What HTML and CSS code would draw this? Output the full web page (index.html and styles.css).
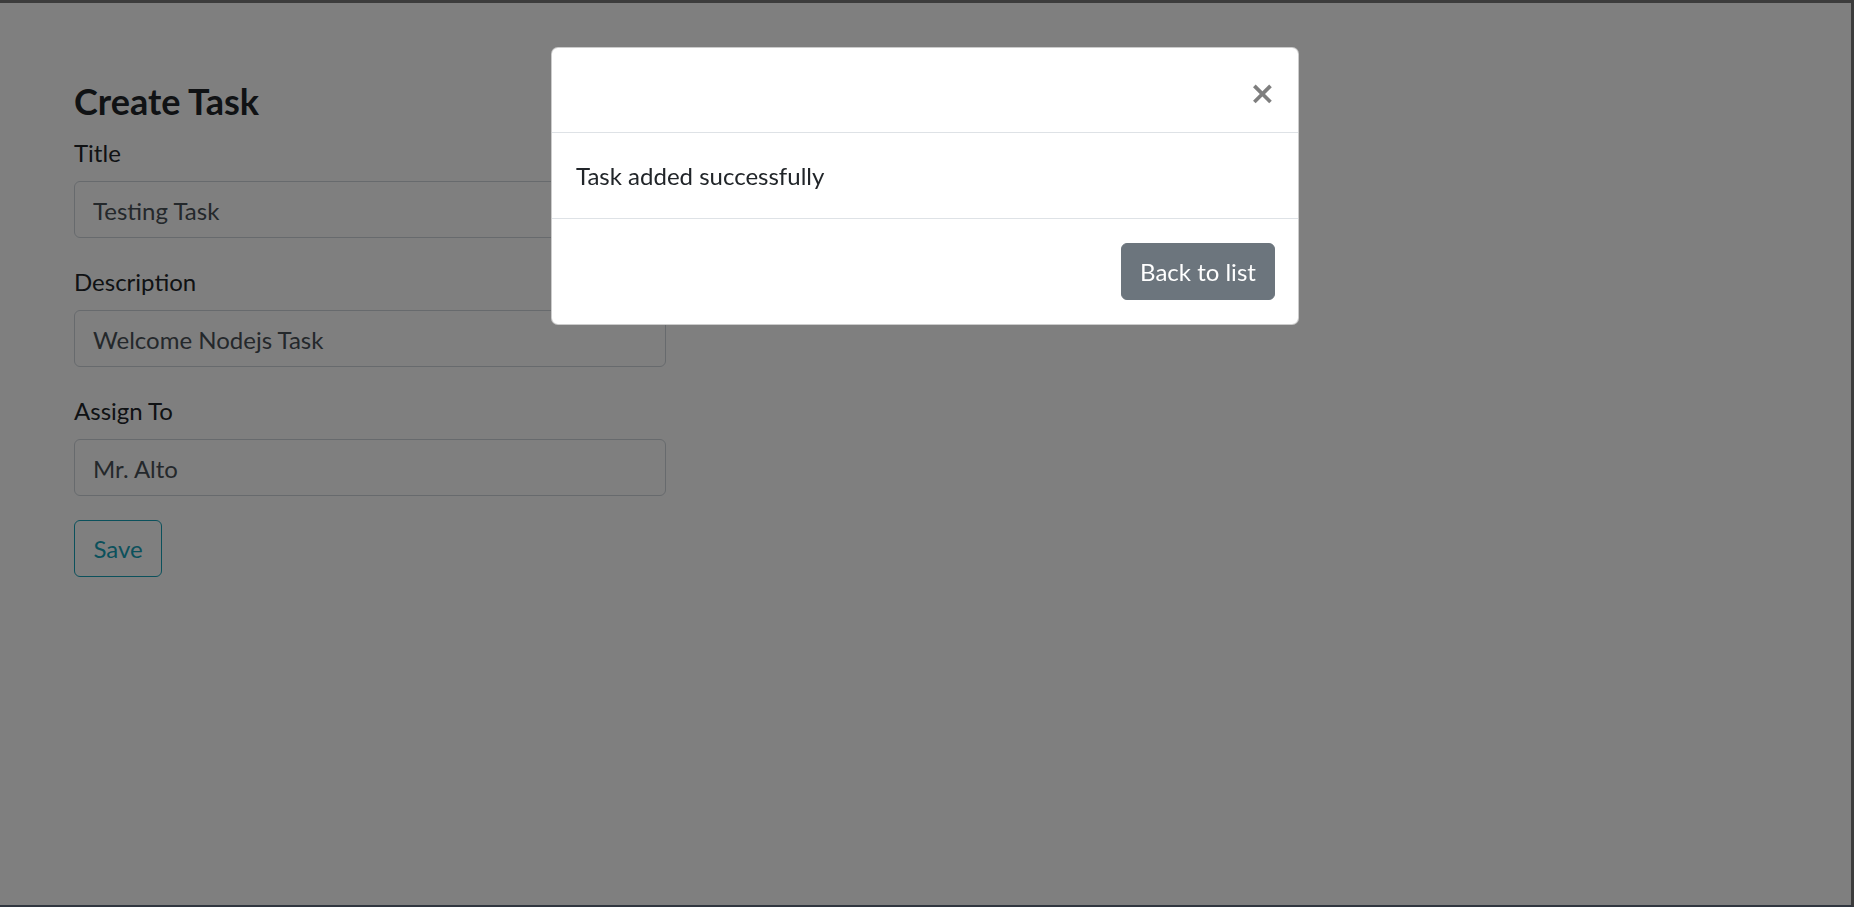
FILE: index.html
```html
<!DOCTYPE html>
<html lang="en">
<head>
<meta charset="utf-8">
<title>Create Task</title>
<link rel="stylesheet" href="styles.css">
</head>
<body>
<main class="page">
  <h4 class="page-title">Create Task</h4>
  <form class="task-form">
    <div class="form-group">
      <label class="form-label">Title</label>
      <input class="form-control" type="text" value="Testing Task">
    </div>
    <div class="form-group">
      <label class="form-label">Description</label>
      <input class="form-control" type="text" value="Welcome Nodejs Task">
    </div>
    <div class="form-group">
      <label class="form-label">Assign To</label>
      <input class="form-control" type="text" value="Mr. Alto">
    </div>
    <button type="button" class="btn btn-outline-info">Save</button>
  </form>
</main>

<div class="backdrop"></div>

<div class="modal-layer">
  <div class="modal-content">
    <div class="modal-header">
      <button type="button" class="close" aria-label="Close">&times;</button>
    </div>
    <div class="modal-body">Task added successfully</div>
    <div class="modal-footer">
      <button type="button" class="btn btn-secondary">Back to list</button>
    </div>
  </div>
</div>

<div class="window-frame"></div>
</body>
</html>
```

FILE: styles.css
```css
* { box-sizing: border-box; }

html, body {
  margin: 0;
  height: 100%;
}

body {
  font-family: "Lato", "Open Sans", sans-serif;
  font-size: 24px;
  line-height: 1.5;
  color: #212529;
  background: #fff;
}

.page {
  padding: 80px 0 0 74px;
  width: 740px;
}

.page-title {
  margin: 0 0 10px;
  font-size: 36px;
  font-weight: 700;
  line-height: 1.2;
}

.task-form {
  width: 592px;
}

.form-group {
  margin-bottom: 24px;
}

.form-label {
  display: block;
  padding-top: 2px;
  margin-bottom: 10px;
}

.form-control {
  display: block;
  width: 100%;
  height: 57px;
  padding: 10px 18px 8px;
  font: inherit;
  color: #495057;
  background: #fff;
  border: 1px solid #ced4da;
  border-radius: 6px;
}

.btn {
  display: inline-block;
  height: 57px;
  padding: 0 17px;
  font: inherit;
  border: 1px solid transparent;
  border-radius: 6px;
  cursor: pointer;
}

.btn-outline-info {
  color: #17a2b8;
  background: transparent;
  border-color: #17a2b8;
  width: 88px;
}

.btn-secondary {
  color: #fff;
  background: #6c757d;
  border-color: #6c757d;
  width: 154px;
}

.backdrop {
  position: fixed;
  inset: 0;
  background: rgba(0, 0, 0, 0.5);
}

.modal-layer {
  position: fixed;
  inset: 0;
  display: flex;
  justify-content: center;
  align-items: flex-start;
  padding: 47px 0 0 0;
}

.modal-content {
  width: 748px;
  margin-left: -4px;
  background: #fff;
  border: 1px solid rgba(0, 0, 0, 0.2);
  border-radius: 7px;
  display: flex;
  flex-direction: column;
}

.modal-header {
  display: flex;
  justify-content: flex-end;
  align-items: center;
  height: 85px;
  padding: 6px 25px 0 24px;
  border-bottom: 1px solid #dee2e6;
}

.close {
  padding: 0;
  margin: 0;
  border: 0;
  background: transparent;
  font-family: "DejaVu Sans", sans-serif;
  font-size: 32px;
  font-weight: 700;
  line-height: 1;
  color: #000;
  opacity: 0.5;
  cursor: pointer;
  width: 24px;
  text-align: center;
}

.modal-body {
  height: 85px;
  padding: 0 24px;
  display: flex;
  align-items: center;
  color: #212529;
}

.modal-footer {
  display: flex;
  justify-content: flex-end;
  align-items: center;
  height: 106px;
  padding: 0 23px;
  border-top: 1px solid #dee2e6;
}

.window-frame {
  position: fixed;
  inset: 0;
  border-top: 3px solid #3c3c3c;
  border-right: 3px solid #3c3c3c;
  border-bottom: 2px solid #30363f;
  pointer-events: none;
}
```
